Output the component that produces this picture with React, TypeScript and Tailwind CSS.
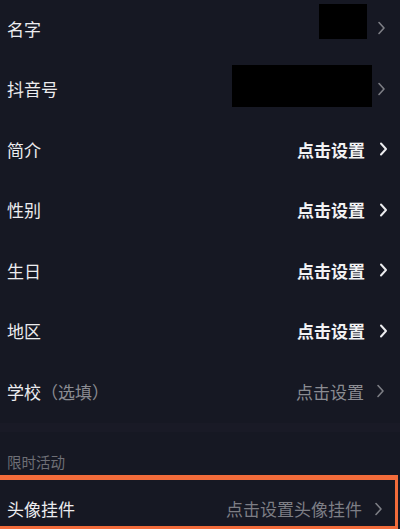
const font = { fontFamily: '"Noto Sans CJK SC", "Noto Sans", sans-serif' };

function Chevron({ tone }: { tone: "white" | "gray" }) {
  return (
    <svg
      width="9"
      height="14"
      viewBox="0 0 9 14"
      fill="none"
      className={tone === "white" ? "text-[#ececef]" : "text-[#7d7e85]"}
    >
      <path
        d="M2 1.5 L7 7 L2 12.5"
        stroke="currentColor"
        strokeWidth={tone === "white" ? 2 : 1.6}
        strokeLinecap="round"
        strokeLinejoin="round"
      />
    </svg>
  );
}

type Row = {
  label: string;
  hint?: string;
  value?: string;
  tone: "white" | "gray" | "mask";
  mask?: string;
};

const rows: Row[] = [
  { label: "名字", tone: "mask", mask: "w-[48px] h-[35px] mb-[13px] mr-[10px]" },
  { label: "抖音号", tone: "mask", mask: "w-[140px] h-[42px] mb-[6px] mr-[5px]" },
  { label: "简介", value: "点击设置", tone: "white" },
  { label: "性别", value: "点击设置", tone: "white" },
  { label: "生日", value: "点击设置", tone: "white" },
  { label: "地区", value: "点击设置", tone: "white" },
  { label: "学校", hint: "（选填）", value: "点击设置", tone: "gray" },
];

export default function App() {
  return (
    <div className="h-[529px] w-[400px] overflow-hidden bg-[#161823]" style={font}>
      <div className="-mt-[2px]">
        {rows.map((r) => (
          <div key={r.label} className="flex h-[60.5px] items-center justify-between pl-[7px]">
            <div className="text-[17px] text-[#ececef]">
              {r.label}
              {r.hint ? <span className="text-[#8b8c92]">{r.hint}</span> : null}
            </div>
            {r.tone === "mask" ? (
              <div className="flex items-center pr-[14px]">
                <div className={`bg-black ${r.mask}`} />
                <Chevron tone="gray" />
              </div>
            ) : r.tone === "white" ? (
              <div className="flex items-center gap-[14px] pr-[12px]">
                <span className="text-[17px] font-bold text-[#f2f2f4]">{r.value}</span>
                <Chevron tone="white" />
              </div>
            ) : (
              <div className="flex items-center gap-[12px] pr-[15px]">
                <span className="text-[17px] text-[#8b8c92]">{r.value}</span>
                <Chevron tone="gray" />
              </div>
            )}
          </div>
        ))}
      </div>
      <div className="mt-[1px] h-[9px] bg-[#191a26]" />
      <div className="flex h-[43.5px] items-end pb-[2px] pl-[7px] text-[14.5px] text-[#6e6f76]">
        限时活动
      </div>
      <div className="mr-[2px] flex h-[54px] items-center justify-between border-t-[5px] border-r-[3px] border-b-[3px] border-[#f36c3b] pt-[12px] pl-[7px] pr-[12px]">
        <span className="text-[17px] text-[#ececef]">头像挂件</span>
        <div className="flex items-center gap-[12px]">
          <span className="text-[17px] text-[#7d7e85]">点击设置头像挂件</span>
          <Chevron tone="gray" />
        </div>
      </div>
    </div>
  );
}
